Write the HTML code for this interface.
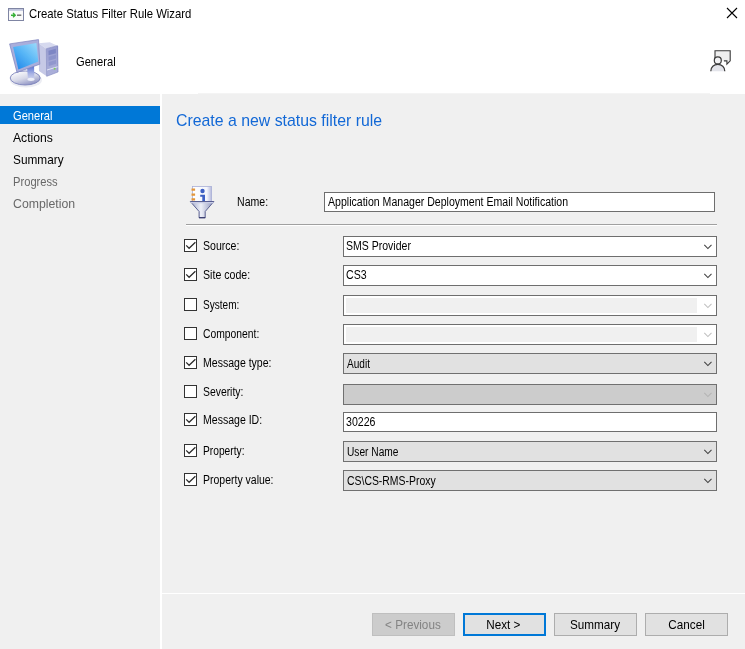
<!DOCTYPE html>
<html lang="en">
<head>
<meta charset="utf-8">
<title>Create Status Filter Rule Wizard</title>
<style>
*{box-sizing:border-box;margin:0;padding:0}
html,body{width:745px;height:649px;overflow:hidden;background:#fff}
body{position:relative;font-family:"Liberation Sans",sans-serif;font-size:12px;color:#000}
.abs{position:absolute}
#hdr{left:0;top:0;width:745px;height:94px;background:#fff}
#side{left:0;top:94px;width:160px;height:555px;background:#f0f0f0}
#main{left:162px;top:94px;width:583px;height:499px;background:#f0f0f0}
#foot{left:162px;top:594px;width:583px;height:55px;background:#f0f0f0}
.t{position:absolute;white-space:nowrap;line-height:1;transform-origin:0 50%}
.ms{display:inline-block;transform:scaleX(.88);transform-origin:0 50%}
.sg{display:inline-block;transform:scaleX(.93);transform-origin:0 50%}
.btn .sg{transform-origin:50% 50%}
#wtitle{left:29px;top:8px;font-size:12.4px;transform:scaleX(.914)}
#htitle{left:76px;top:56px;font-size:12.6px;transform:scaleX(.885)}
.nav{position:absolute;left:0;width:160px;height:18px;font-size:12.6px;line-height:18px;padding-left:13px;padding-top:1px;white-space:nowrap}
.nav.sel{background:#0078d7;color:#fff}
.nav.dis{color:#686868}
#h1{left:176px;top:113px;font-size:16.6px;color:#1268d6;transform:scaleX(.955)}
.lbl{position:absolute;left:203px;font-size:12px;line-height:14px;white-space:nowrap}
.cb{position:absolute;left:184px;width:13px;height:13px;border:1px solid #333;background:#fff}
.cb svg{position:absolute;left:0;top:0}
.cmb{position:absolute;left:343px;width:374px;height:21px;border:1px solid #6e6e6e;background:#fff;font-size:12px;line-height:19px;padding-left:3px;white-space:nowrap}
.cmb.tx{height:20px;line-height:18px;padding-left:2px}
.cmb.ed{padding-left:2px}
.cmb.dl{background:#e1e1e1;border-color:#707070;padding-top:1px}
.cmb.dd{background:#ccc;border-color:#707070}
.cmb.ed .fill{position:absolute;left:2px;top:2px;width:351px;height:15px;background:#f0f0f0}
.cmb svg{position:absolute;right:4px;top:7px}
.btn{position:absolute;top:613px;width:83px;height:23px;border:1px solid #adadad;background:#e1e1e1;font-size:12.6px;line-height:23px;text-align:center;white-space:nowrap}
.btn.def{border:2px solid #0078d7;line-height:21px}
.btn.dis{background:#ccc;border-color:#bfbfbf;color:#838383}
</style>
</head>
<body>
<div id="hdr" class="abs"></div>
<div id="side" class="abs"></div>
<div id="main" class="abs"></div>
<div id="foot" class="abs"></div>
<div class="abs" style="left:198px;top:93px;width:512px;height:1px;background:#f4f4f4"></div>

<!-- title bar -->
<svg class="abs" style="left:8px;top:8px" width="16" height="13" viewBox="0 0 16 13">
 <rect x="0.5" y="0.5" width="15" height="12" fill="#fafafa" stroke="#7f85a3"/>
 <rect x="1" y="1" width="14" height="1.800" fill="#bfc4dc"/>
 <path d="M3 7.2h3.4M5 5.100l2.200 2.100-2.200 2.100" stroke="#35b035" stroke-width="1.400" fill="none"/>
 <rect x="9" y="6.500" width="4.300" height="1.400" fill="#6a6a6a"/>
</svg>
<div id="wtitle" class="t">Create Status Filter Rule Wizard</div>
<svg class="abs" style="left:726px;top:7px" width="12" height="12" viewBox="0 0 12 12"><path d="M1 1l10 10M11 1L1 11" stroke="#000" stroke-width="1.1" fill="none"/></svg>

<svg class="abs" style="left:0;top:34px" width="70" height="60" viewBox="0 34 70 60">
 <defs>
  <linearGradient id="scr" x1="1" y1="0" x2="0.1" y2="1"><stop offset="0" stop-color="#9edcfb"/><stop offset=".5" stop-color="#58b6f6"/><stop offset="1" stop-color="#1f86ea"/></linearGradient>
  <linearGradient id="bas" x1="0.2" y1="0" x2="0.8" y2="1"><stop offset="0" stop-color="#ffffff"/><stop offset=".5" stop-color="#d6d8e8"/><stop offset="1" stop-color="#8287bd"/></linearGradient>
  <linearGradient id="nk" x1="0" y1="0" x2="0" y2="1"><stop offset="0" stop-color="#4866d2"/><stop offset=".6" stop-color="#a9b3e4"/><stop offset="1" stop-color="#d4d8ee"/></linearGradient>
  <linearGradient id="twf" x1="0" y1="0" x2="0" y2="1"><stop offset="0" stop-color="#969bd0"/><stop offset="1" stop-color="#adb1da"/></linearGradient>
  <filter id="bl" x="-10%" y="-10%" width="120%" height="120%"><feGaussianBlur stdDeviation="0.35"/></filter>
 </defs>
 <g filter="url(#bl)">
  <ellipse cx="26" cy="80" rx="16" ry="7.5" fill="#e4e5ee" opacity=".7"/>
  <!-- tower -->
  <polygon points="38.5,43.3 49.8,42.2 57.5,45.7 46.3,48.7" fill="#d6d9ef"/>
  <polygon points="38.5,43.3 46.3,48.7 46.7,76.3 39,71" fill="#c6c9e6"/>
  <path d="M57.600 46v26" stroke="#6d74b6" stroke-width=".8"/>
  <polygon points="46.3,48.7 57.5,45.7 58,72 46.7,76.3" fill="url(#twf)" stroke="#7e84be" stroke-width=".6"/>
  <polygon points="48.5,50.8 55.8,48.8 55.9,53.2 48.6,55.3" fill="#7d86c4"/>
  <polygon points="48.6,56.8 55.9,54.7 56,58.6 48.7,60.8" fill="#8c94cb"/>
  <polygon points="48.7,62 56,59.9 56,63.8 48.8,66" fill="#9097cd"/>
  <polygon points="47,69.5 57.6,66.2 57.7,67.3 47,70.6" fill="#e2e4f4"/>
  <circle cx="54.6" cy="68.8" r="1" fill="#7fd05a"/>
  <!-- base -->
  <ellipse cx="25.2" cy="78" rx="15" ry="7" fill="url(#bas)" stroke="#7d83bb" stroke-width=".9"/>
  <!-- neck -->
  <polygon points="27,66.5 34,64.5 34.4,78.5 28,80" fill="url(#nk)"/>
  <ellipse cx="31" cy="79.3" rx="3.6" ry="1.6" fill="#eceef8"/>
  <!-- monitor -->
  <polygon points="9.6,43.9 38.5,39.6 39.8,64.2 17,72.4" fill="#a9aedb" stroke="#7b81bd" stroke-width=".7" stroke-linejoin="round"/>
  <polygon points="13.1,47 36.4,43.1 38.3,61.4 18.4,69.4" fill="url(#scr)"/>
 </g>
</svg>
<div id="htitle" class="t">General</div>
<svg class="abs" style="left:706px;top:46px" width="30" height="30" viewBox="706 46 30 30">
 <path d="M715 60.5V50.8h15.2v10l-3.3 3.3v-3.2h-3" fill="#efefef" stroke="#3a3a3a" stroke-width="1.1" stroke-linejoin="miter"/>
 <path d="M710.8 71.2c0-4 3-6.8 7-6.8s7 2.800 7 6.800z" fill="#e3e4ea" stroke="none"/>
 <path d="M710.800 71.2c0-4 3-6.800 7-6.800s7 2.800 7 6.800" fill="none" stroke="#3a3a3a" stroke-width="1.200"/>
 <circle cx="717.800" cy="60.400" r="3.500" fill="#f2f2f4" stroke="#3a3a3a" stroke-width="1.200"/>
</svg>

<!-- nav -->
<div class="nav sel" style="top:106px"><span class="sg" style="transform:scaleX(0.882)">General</span></div>
<div class="nav " style="top:128px"><span class="sg" style="transform:scaleX(0.966)">Actions</span></div>
<div class="nav " style="top:150px"><span class="sg" style="transform:scaleX(0.939)">Summary</span></div>
<div class="nav dis" style="top:172px"><span class="sg" style="transform:scaleX(0.887)">Progress</span></div>
<div class="nav dis" style="top:194px"><span class="sg" style="transform:scaleX(0.976)">Completion</span></div>

<div id="h1" class="t">Create a new status filter rule</div>

<svg class="abs" style="left:186px;top:182px" width="32" height="40" viewBox="186 182 32 40">
 <defs>
  <linearGradient id="fun" x1="0" y1="0" x2="1" y2="0"><stop offset="0" stop-color="#9ca3c6"/><stop offset=".45" stop-color="#eef0f8"/><stop offset="1" stop-color="#8c93bb"/></linearGradient>
  <linearGradient id="pad" x1="0" y1="0" x2="1" y2="0"><stop offset="0" stop-color="#ffffff"/><stop offset=".75" stop-color="#f4f5fb"/><stop offset="1" stop-color="#b5b9dc"/></linearGradient>
 </defs>
 <rect x="192.500" y="186.500" width="19" height="15" fill="url(#pad)" stroke="#a9aed6" stroke-width=".8"/>
 <path d="M191.500 189.600h3.600M191.500 194.600h3.600M191.500 199.400h3.600" stroke="#e3963a" stroke-width="2.200"/>
 <circle cx="202.500" cy="191" r="2.200" fill="#3d5fc4"/>
 <path d="M200.200 194.700h4.800v6.300h-2.700v-4.200h-2.100z" fill="#3d5fc4"/>
 <path d="M190.300 201.500h23.600l-8.700 10v6.300h-6.100v-6.300z" fill="url(#fun)" stroke="#4d5389" stroke-width=".9" stroke-linejoin="round"/>
 <path d="M199 217.700h6.200" stroke="#2e3266" stroke-width="1"/>
 <path d="M190.800 202h22.600v1.300h-22.600z" fill="#c9cde6"/>
</svg>
<div class="lbl" style="left:237px;top:195px"><span class="ms">Name:</span></div>
<div class="abs" style="left:324px;top:192px;width:391px;height:20px;border:1px solid #6e6e6e;background:#fff;font-size:12px;line-height:18px;padding-left:3px;white-space:nowrap"><span class="ms">Application Manager Deployment Email Notification</span></div>
<div class="abs" style="left:186px;top:224px;width:531px;height:2px;background:#fff;border-top:1px solid #a0a0a0"></div>

<!-- rows -->
<div class="cb" style="top:239px"><svg width="11" height="11" viewBox="0 0 11 11"><path d="M1.2 5.4l2.9 2.9 6.3-6" stroke="#2b2b2b" stroke-width="1.250" fill="none"/></svg></div>
<div class="lbl" style="top:239px"><span class="ms" style="transform:scaleX(0.879)">Source:</span></div>
<div class="cmb ed" style="top:236px"><span class="ms" style="transform:scaleX(0.877)">SMS Provider</span><svg width="9" height="6" viewBox="0 0 9 6"><path d="M1.3 0.9l3.600 3.600 3.600-3.600" stroke="#404040" stroke-width="1.050" fill="none"/></svg></div>
<div class="cb" style="top:268px"><svg width="11" height="11" viewBox="0 0 11 11"><path d="M1.2 5.4l2.9 2.9 6.3-6" stroke="#2b2b2b" stroke-width="1.250" fill="none"/></svg></div>
<div class="lbl" style="top:268px"><span class="ms" style="transform:scaleX(0.884)">Site code:</span></div>
<div class="cmb ed" style="top:265px"><span class="ms" style="transform:scaleX(0.884)">CS3</span><svg width="9" height="6" viewBox="0 0 9 6"><path d="M1.3 0.9l3.600 3.600 3.600-3.600" stroke="#404040" stroke-width="1.050" fill="none"/></svg></div>
<div class="cb" style="top:298px"></div>
<div class="lbl" style="top:298px"><span class="ms" style="transform:scaleX(0.838)">System:</span></div>
<div class="cmb ed" style="top:295px"><div class="fill"></div><svg width="9" height="6" viewBox="0 0 9 6"><path d="M1.3 0.9l3.600 3.600 3.600-3.600" stroke="#c0c0c0" stroke-width="1.050" fill="none"/></svg></div>
<div class="cb" style="top:327px"></div>
<div class="lbl" style="top:327px"><span class="ms" style="transform:scaleX(0.861)">Component:</span></div>
<div class="cmb ed" style="top:324px"><div class="fill"></div><svg width="9" height="6" viewBox="0 0 9 6"><path d="M1.3 0.9l3.600 3.600 3.600-3.600" stroke="#c0c0c0" stroke-width="1.050" fill="none"/></svg></div>
<div class="cb" style="top:356px"><svg width="11" height="11" viewBox="0 0 11 11"><path d="M1.2 5.4l2.9 2.9 6.3-6" stroke="#2b2b2b" stroke-width="1.250" fill="none"/></svg></div>
<div class="lbl" style="top:356px"><span class="ms" style="transform:scaleX(0.878)">Message type:</span></div>
<div class="cmb dl" style="top:353px"><span class="ms" style="transform:scaleX(0.84)">Audit</span><svg width="9" height="6" viewBox="0 0 9 6"><path d="M1.3 0.9l3.600 3.600 3.600-3.600" stroke="#404040" stroke-width="1.050" fill="none"/></svg></div>
<div class="cb" style="top:385px"></div>
<div class="lbl" style="top:385px"><span class="ms" style="transform:scaleX(0.865)">Severity:</span></div>
<div class="cmb dd" style="top:384px"><svg width="9" height="6" viewBox="0 0 9 6"><path d="M1.3 0.9l3.600 3.600 3.600-3.600" stroke="#b4b4b4" stroke-width="1.050" fill="none"/></svg></div>
<div class="cb" style="top:413px"><svg width="11" height="11" viewBox="0 0 11 11"><path d="M1.2 5.4l2.9 2.9 6.3-6" stroke="#2b2b2b" stroke-width="1.250" fill="none"/></svg></div>
<div class="lbl" style="top:413px"><span class="ms" style="transform:scaleX(0.878)">Message ID:</span></div>
<div class="cmb tx" style="top:412px"><span class="ms" style="transform:scaleX(0.883)">30226</span></div>
<div class="cb" style="top:444px"><svg width="11" height="11" viewBox="0 0 11 11"><path d="M1.2 5.4l2.9 2.9 6.3-6" stroke="#2b2b2b" stroke-width="1.250" fill="none"/></svg></div>
<div class="lbl" style="top:444px"><span class="ms" style="transform:scaleX(0.852)">Property:</span></div>
<div class="cmb dl" style="top:441px"><span class="ms" style="transform:scaleX(0.848)">User Name</span><svg width="9" height="6" viewBox="0 0 9 6"><path d="M1.3 0.9l3.600 3.600 3.600-3.600" stroke="#404040" stroke-width="1.050" fill="none"/></svg></div>
<div class="cb" style="top:473px"><svg width="11" height="11" viewBox="0 0 11 11"><path d="M1.2 5.4l2.9 2.9 6.3-6" stroke="#2b2b2b" stroke-width="1.250" fill="none"/></svg></div>
<div class="lbl" style="top:473px"><span class="ms" style="transform:scaleX(0.874)">Property value:</span></div>
<div class="cmb dl" style="top:470px"><span class="ms" style="transform:scaleX(0.869)">CS\CS-RMS-Proxy</span><svg width="9" height="6" viewBox="0 0 9 6"><path d="M1.3 0.9l3.600 3.600 3.600-3.600" stroke="#404040" stroke-width="1.050" fill="none"/></svg></div>

<div class="btn dis" style="left:372px;padding-right:1px"><span class="sg">&lt; Previous</span></div>
<div class="btn def" style="left:463px;padding-right:2px"><span class="sg">Next &gt;</span></div>
<div class="btn" style="left:554px;padding-right:2px"><span class="sg">Summary</span></div>
<div class="btn" style="left:645px"><span class="sg">Cancel</span></div>
</body>
</html>
